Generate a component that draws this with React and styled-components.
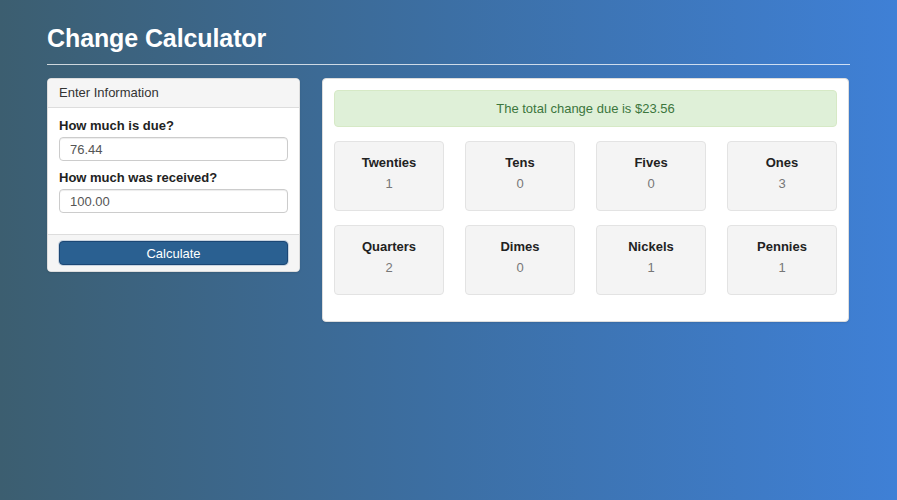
import React, { useState } from 'react'
import styled, { createGlobalStyle } from 'styled-components'

const GlobalStyle = createGlobalStyle`
  html, body {
    margin: 0;
    padding: 0;
  }
  body {
    min-height: 500px;
    font-family: "Liberation Sans", Arial, Helvetica, sans-serif;
    font-size: 13px;
    color: #333;
    background: linear-gradient(to right, #3c5e70 0%, #3c6fa4 50%, #3f80d6 100%);
  }
`

const Page = styled.div`
  min-height: 500px;
  padding: 0 47px 0 47px;
  box-sizing: border-box;
`

const Title = styled.h1`
  margin: 0;
  padding-top: 23px;
  font-size: 25px;
  line-height: 30px;
  font-weight: bold;
  color: #fff;
  letter-spacing: -0.1px;
`

const Rule = styled.hr`
  margin: 11px 0 13px 0;
  border: 0;
  border-top: 1px solid rgba(255, 255, 255, 0.75);
`

const Layout = styled.div`
  display: grid;
  grid-template-columns: 253px 527px;
  column-gap: 22px;
  align-items: start;
`

const Panel = styled.div`
  background: #fff;
  border: 1px solid #ddd;
  border-radius: 4px;
  box-shadow: 0 1px 2px rgba(0, 0, 0, 0.1);
  overflow: hidden;
`

const PanelHeading = styled.div`
  background: #f5f5f5;
  border-bottom: 1px solid #ddd;
  padding: 7px 11px;
  line-height: 14px;
  color: #333;
`

const PanelBody = styled.div`
  padding: ${p => p.$pad || '11px'};
`

const PanelFooter = styled.div`
  background: #f5f5f5;
  border-top: 1px solid #ddd;
  padding: 6px 11px 6px 11px;
`

const Field = styled.div`
  margin-bottom: ${p => (p.$last ? '11px' : '9px')};
`

const Label = styled.label`
  display: block;
  font-weight: bold;
  line-height: 15px;
  margin-bottom: 4px;
  color: #222;
`

const Input = styled.input`
  display: block;
  width: 100%;
  box-sizing: border-box;
  height: 24px;
  padding: 0 10px;
  font-family: inherit;
  font-size: 13px;
  color: #555;
  border: 1px solid #ccc;
  border-radius: 4px;
  box-shadow: inset 0 1px 1px rgba(0, 0, 0, 0.075);
  outline: none;
`

const Button = styled.button`
  display: block;
  width: 100%;
  height: 24px;
  font-family: inherit;
  font-size: 13px;
  color: #fff;
  background: #2a6091;
  border: 1px solid #1b4775;
  border-radius: 4px;
  box-shadow: 0 0 0 1px #c9d4e0;
  cursor: pointer;
`

const Alert = styled.div`
  background: #dff0d8;
  border: 1px solid #d6e9c6;
  color: #3c763d;
  border-radius: 4px;
  height: 37px;
  box-sizing: border-box;
  display: flex;
  align-items: center;
  justify-content: center;
  margin-bottom: 14px;
`

const Coins = styled.div`
  display: grid;
  grid-template-columns: repeat(4, 110px);
  justify-content: space-between;
  row-gap: 14px;
  margin-bottom: 15px;
`

const Well = styled.div`
  height: 70px;
  box-sizing: border-box;
  background: #f4f4f4;
  border: 1px solid #e3e3e3;
  border-radius: 4px;
  text-align: center;
  padding-top: 13px;
`

const WellTitle = styled.div`
  font-weight: bold;
  color: #222;
  line-height: 16px;
  margin-bottom: 5px;
`

const WellValue = styled.div`
  color: #777;
  line-height: 16px;
`

const denominations = [
  ['Twenties', 2000],
  ['Tens', 1000],
  ['Fives', 500],
  ['Ones', 100],
  ['Quarters', 25],
  ['Dimes', 10],
  ['Nickels', 5],
  ['Pennies', 1],
]

function breakdown(due, received) {
  let cents = Math.round((parseFloat(received) - parseFloat(due)) * 100)
  if (isNaN(cents) || cents < 0) cents = 0
  const total = cents
  const counts = denominations.map(([name, value]) => {
    const n = Math.floor(cents / value)
    cents -= n * value
    return [name, n]
  })
  return { total, counts }
}

export default function App() {
  const [due, setDue] = useState('76.44')
  const [received, setReceived] = useState('100.00')
  const [result, setResult] = useState(() => breakdown('76.44', '100.00'))

  return (
    <Page>
      <GlobalStyle />
      <Title>Change Calculator</Title>
      <Rule />
      <Layout>
        <Panel>
          <PanelHeading>Enter Information</PanelHeading>
          <PanelBody $pad="10px 11px 10px 11px">
            <Field>
              <Label>How much is due?</Label>
              <Input value={due} onChange={e => setDue(e.target.value)} />
            </Field>
            <Field $last>
              <Label>How much was received?</Label>
              <Input value={received} onChange={e => setReceived(e.target.value)} />
            </Field>
          </PanelBody>
          <PanelFooter>
            <Button onClick={() => setResult(breakdown(due, received))}>Calculate</Button>
          </PanelFooter>
        </Panel>
        <Panel>
          <PanelBody>
            <Alert>The total change due is ${(result.total / 100).toFixed(2)}</Alert>
            <Coins>
              {result.counts.map(([name, n]) => (
                <Well key={name}>
                  <WellTitle>{name}</WellTitle>
                  <WellValue>{n}</WellValue>
                </Well>
              ))}
            </Coins>
          </PanelBody>
        </Panel>
      </Layout>
    </Page>
  )
}
